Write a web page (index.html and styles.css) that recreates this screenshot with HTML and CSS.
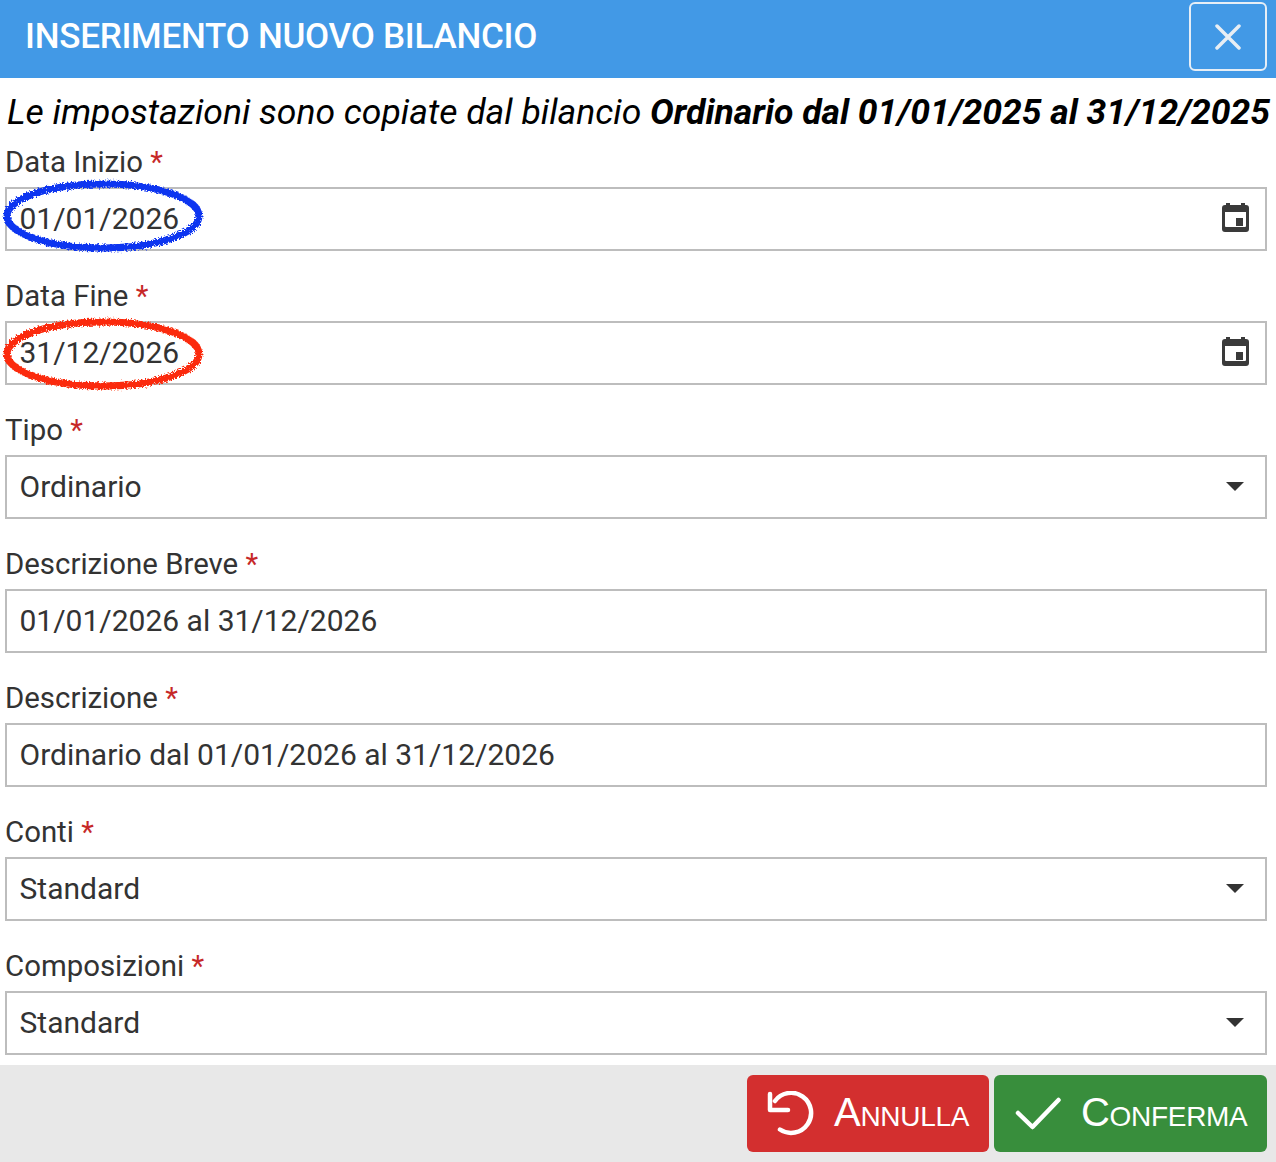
FILE: index.html
```html
<!DOCTYPE html>
<html lang="it">
<head>
<meta charset="utf-8">
<title>Inserimento nuovo bilancio</title>
<link rel="stylesheet" href="styles.css">
</head>
<body>
<div class="dialog">
  <header class="head">
    <h1 class="title">INSERIMENTO NUOVO BILANCIO</h1>
    <button class="close" type="button" aria-label="Chiudi">
      <svg width="26" height="26" viewBox="0 0 26 26"><path d="M2 2 24 24M24 2 2 24" class="close-x"/></svg>
    </button>
  </header>
  <p class="note">Le impostazioni sono copiate dal bilancio <b>Ordinario dal 01/01/2025 al 31/12/2025</b></p>
  <main class="form">
    <div class="field">
      <div class="label">Data Inizio <span class="req">*</span></div>
      <div class="box"><span class="value">01/01/2026</span>
        <svg class="cal" width="27" height="29" viewBox="0 0 27 29"><path class="cal-body" fill-rule="evenodd" d="M3 2h21a3 3 0 0 1 3 3v21a3 3 0 0 1-3 3H3a3 3 0 0 1-3-3V5a3 3 0 0 1 3-3ZM3 9v14a1 1 0 0 0 1 1h19a1 1 0 0 0 1-1V9ZM14 15h7v8h-7Z"/><path class="cal-body" d="M4 0h4v2H4ZM19 0h4v2h-4Z"/></svg>
        <svg class="mark mark-top" width="204" height="76" viewBox="0 0 204 76"><ellipse class="mark-line mark-blue" cx="102" cy="38" rx="96" ry="32"/></svg>
      </div>
    </div>
    <div class="field">
      <div class="label">Data Fine <span class="req">*</span></div>
      <div class="box"><span class="value">31/12/2026</span>
        <svg class="cal" width="27" height="29" viewBox="0 0 27 29"><path class="cal-body" fill-rule="evenodd" d="M3 2h21a3 3 0 0 1 3 3v21a3 3 0 0 1-3 3H3a3 3 0 0 1-3-3V5a3 3 0 0 1 3-3ZM3 9v14a1 1 0 0 0 1 1h19a1 1 0 0 0 1-1V9ZM14 15h7v8h-7Z"/><path class="cal-body" d="M4 0h4v2H4ZM19 0h4v2h-4Z"/></svg>
        <svg class="mark mark-low" width="204" height="76" viewBox="0 0 204 76"><ellipse class="mark-line mark-red" cx="102" cy="38" rx="96" ry="32"/></svg>
      </div>
    </div>
    <div class="field">
      <div class="label">Tipo <span class="req">*</span></div>
      <div class="box"><span class="value">Ordinario</span><span class="caret"></span></div>
    </div>
    <div class="field">
      <div class="label">Descrizione Breve <span class="req">*</span></div>
      <div class="box"><span class="value">01/01/2026 al 31/12/2026</span></div>
    </div>
    <div class="field">
      <div class="label">Descrizione <span class="req">*</span></div>
      <div class="box"><span class="value">Ordinario dal 01/01/2026 al 31/12/2026</span></div>
    </div>
    <div class="field">
      <div class="label">Conti <span class="req">*</span></div>
      <div class="box"><span class="value">Standard</span><span class="caret"></span></div>
    </div>
    <div class="field">
      <div class="label">Composizioni <span class="req">*</span></div>
      <div class="box"><span class="value">Standard</span><span class="caret"></span></div>
    </div>
  </main>
  <footer class="foot">
    <button class="btn btn-red" type="button">
      <svg width="48" height="46" viewBox="0 0 48 46"><path class="btn-ico" d="M3 3V19H21M8 10A20 20 0 1 1 13 38.500"/></svg>
      <span class="btn-text">Annulla</span>
    </button>
    <button class="btn btn-green" type="button">
      <svg width="50" height="36" viewBox="0 0 50 36"><path class="btn-ico" d="M4 17 18.500 31 44.500 4"/></svg>
      <span class="btn-text">Conferma</span>
    </button>
  </footer>
</div>
<svg class="defs" width="0" height="0">
  <filter id="rough" x="-5%" y="-10%" width="110%" height="120%">
    <feTurbulence type="fractalNoise" baseFrequency="0.6" numOctaves="2" seed="4"/>
    <feDisplacementMap in="SourceGraphic" scale="6"/>
  </filter>
</svg>
</body>
</html>
```

FILE: styles.css
```css
* { box-sizing: border-box; }
html, body { margin: 0; padding: 0; background: #fff; }
body { font-family: Roboto, "Liberation Sans", sans-serif; width: 1276px; height: 1162px; overflow: hidden; }
.dialog { display: flex; flex-direction: column; height: 1162px; }
.head {
  flex: none; height: 78px; display: flex; align-items: flex-start; justify-content: space-between;
  padding: 2px 9px 0 25px;
  background: #4299e6;
}
.title { margin: 0; color: #fff; font-size: 35px; line-height: 70px; font-weight: 500; letter-spacing: -0.26px; }
.close {
  width: 78px; height: 69px; padding: 0;
  display: flex; align-items: center; justify-content: center;
  background: transparent; border: 2px solid #e6eef6; border-radius: 6px;
}
.close-x { fill: none; stroke: #e8eef4; stroke-width: 3.5; stroke-linecap: round; }
.note { flex: none; margin: 0; padding: 14px 0 0 7px; height: 63px; font-size: 35.5px; line-height: 40px; font-style: italic; color: #000; white-space: nowrap; }
.note b { font-weight: 700; }
.form { display: flex; flex-direction: column; gap: 24px; padding: 0 9px 0 5px; flex: 1; }
.field { display: flex; flex-direction: column; }
.label { height: 46px; line-height: 42px; font-size: 29.4px; color: #333; white-space: nowrap; }
.req { color: #c62828; }
.box {
  position: relative; height: 64px; display: flex; align-items: center; justify-content: space-between;
  border: 2px solid #bdbdbd; padding: 0 16px 2px 12.5px; background: #fff;
}
.value { font-size: 30px; color: #333; white-space: nowrap; }
.cal { display: block; margin-bottom: 2px; }
.cal-body { fill: #3a3a3a; }
.caret { width: 0; height: 0; border-left: 9px solid transparent; border-right: 9px solid transparent; border-top: 9px solid #333; margin-right: 5px; }
.mark { position: absolute; left: -6px; overflow: visible; pointer-events: none; }
.mark-top { top: -11px; }
.mark-low { top: -7px; }
.mark-line { fill: none; stroke-width: 7; filter: url(#rough); }
.mark-blue { stroke: #0f35f0; }
.mark-red { stroke: #fb2a0a; }
.foot {
  flex: none; height: 97px; background: #e8e8e8; display: flex; justify-content: flex-end; align-items: center;
  gap: 5px; padding: 0 9px 0 0;
}
.btn {
  height: 77px; border: 0; border-radius: 6px; color: #fff; display: flex; align-items: center;
  font-family: "Liberation Sans", sans-serif; font-size: 40px; font-variant: small-caps; letter-spacing: -0.3px; padding: 0;
}
.btn-text { position: relative; top: -1px; }
.btn-red { width: 242px; background: #d32f2f; padding-left: 20px; gap: 19px; }
.btn-green { width: 273px; background: #388e3c; padding-left: 20px; gap: 17px; }
.btn-ico { fill: none; stroke: #fff; stroke-width: 4.5; stroke-linecap: round; stroke-linejoin: round; }
.defs { position: absolute; }
```
